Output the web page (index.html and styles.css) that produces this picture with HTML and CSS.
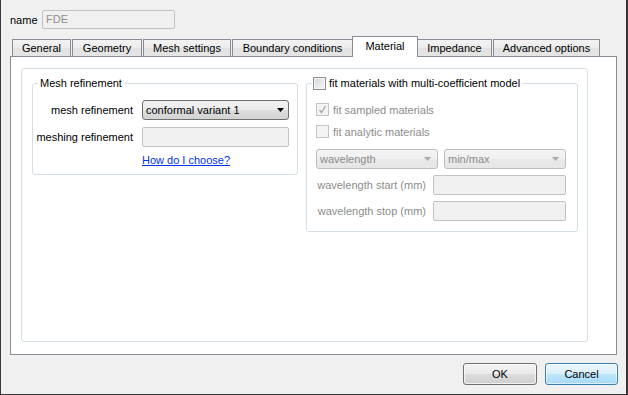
FILE: index.html
```html
<!DOCTYPE html>
<html>
<head>
<meta charset="utf-8">
<title>FDE</title>
<link rel="stylesheet" href="styles.css">
</head>
<body>
<div class="dialog">
  <div class="name-row">
    <span class="name-label">name</span>
    <div class="text-field name-field">FDE</div>
  </div>
  <div class="tabs">
    <div class="tab t-general">General</div>
    <div class="tab t-geometry">Geometry</div>
    <div class="tab t-mesh">Mesh settings</div>
    <div class="tab t-boundary">Boundary conditions</div>
    <div class="tab tab-active t-material">Material</div>
    <div class="tab t-impedance">Impedance</div>
    <div class="tab t-advanced">Advanced options</div>
  </div>
  <div class="pane">
    <div class="panel">
      <fieldset class="group group-mesh">
        <legend>Mesh refinement</legend>
        <div class="form-grid">
          <span class="field-label">mesh refinement</span>
          <div class="combo">
            <span>conformal variant 1</span>
            <svg class="arrow" width="7" height="4" viewBox="0 0 7 4"><polygon points="0,0 7,0 3.5,4" fill="#000"/></svg>
          </div>
          <span class="field-label">meshing refinement</span>
          <div class="text-field"></div>
          <a class="help-link" href="#">How do I choose?</a>
        </div>
      </fieldset>
      <fieldset class="group group-fit">
        <legend><span class="check"></span>fit materials with multi-coefficient model</legend>
        <div class="fit-body">
          <div class="check-row disabled">
            <span class="check check-disabled">
              <svg width="11" height="11" viewBox="0 0 11 11"><polyline points="2.5,6 4.5,8.5 8.5,2" fill="none" stroke="#a6a6a6" stroke-width="1.3"/></svg>
            </span>
            <span>fit sampled materials</span>
          </div>
          <div class="check-row disabled row-analytic">
            <span class="check check-disabled"></span>
            <span>fit analytic materials</span>
          </div>
          <div class="combo-row">
            <div class="combo combo-disabled">
              <span>wavelength</span>
              <svg class="arrow" width="7" height="4" viewBox="0 0 7 4"><polygon points="0,0 7,0 3.5,4" fill="#a9a9a9"/></svg>
            </div>
            <div class="combo combo-disabled">
              <span>min/max</span>
              <svg class="arrow" width="7" height="4" viewBox="0 0 7 4"><polygon points="0,0 7,0 3.5,4" fill="#a9a9a9"/></svg>
            </div>
          </div>
          <div class="range-grid">
            <span class="field-label disabled">wavelength start (mm)</span>
            <div class="text-field"></div>
            <span class="field-label disabled">wavelength stop (mm)</span>
            <div class="text-field"></div>
          </div>
        </div>
      </fieldset>
    </div>
  </div>
  <div class="buttons">
    <button class="btn btn-ok">OK</button>
    <button class="btn btn-default">Cancel</button>
  </div>
</div>
</body>
</html>
```
FILE: styles.css
```css
html, body {
  margin: 0;
  padding: 0;
  background: #f0f0f0;
}

body {
  font-family: "Liberation Sans", Arial, sans-serif;
  font-size: 11px;
  color: #000;
}

.dialog {
  width: 628px;
  height: 395px;
  box-sizing: border-box;
  background: #f0f0f0;
  border-left: 1px solid #3d3537;
  border-right: 2px solid #3d3537;
  border-bottom: 1px solid #3d3537;
  display: flex;
  flex-direction: column;
}

/* name row */
.name-row {
  display: flex;
  align-items: center;
  padding: 10px 0 0 9px;
  height: 19px;
}

.name-label {
  display: inline-block;
  width: 32px;
  padding-top: 1px;
}

.text-field {
  box-sizing: border-box;
  height: 20px;
  border: 1px solid #c2c2c2;
  border-radius: 2px;
  background: #f0f0f0;
}

.name-field {
  width: 133px;
  height: 19px;
  line-height: 17px;
  padding-left: 3px;
  color: #8e8f8f;
}

/* tabs */
.tabs {
  display: flex;
  align-items: flex-end;
  margin-top: 7px;
  padding-left: 11px;
  height: 20px;
}

.tab {
  box-sizing: border-box;
  height: 17px;
  border: 1px solid #898c95;
  border-bottom: none;
  margin-right: 1px;
  text-align: center;
  line-height: 16px;
  background: linear-gradient(#f3f3f3, #ebebeb 50%, #e2e2e2 51%, #e5e5e5);
  white-space: nowrap;
}

.tab-active {
  position: relative;
  z-index: 1;
  height: 21px;
  margin-left: -2px;
  margin-right: -1px;
  margin-bottom: -1px;
  padding-top: 2px;
  line-height: 15px;
  background: #fff;
}

.t-general { width: 59px; }
.t-geometry { width: 70px; }
.t-mesh { width: 88px; }
.t-boundary { width: 121px; }
.t-material { width: 66px; }
.t-impedance { width: 75px; }
.t-advanced { width: 107px; }

/* pane */
.pane {
  box-sizing: border-box;
  height: 299px;
  margin: 0 9px;
  border: 1px solid #898c95;
  background: #fff;
  padding: 11px 28px 12px 10px;
  display: flex;
}

.panel {
  flex: 1;
  border: 1px solid #d5dfe5;
  border-radius: 3px;
  display: flex;
  align-items: flex-start;
  gap: 8px;
  padding: 7px 0 0 10px;
}

/* group boxes */
.group {
  margin: 0;
  min-width: 0;
  box-sizing: border-box;
  border: 1px solid #d5dfe5;
  border-radius: 3px;
}

.group legend {
  line-height: 14px;
  padding: 0 2px;
}

.group-mesh {
  width: 266px;
  padding: 10px 8px 7px 5px;
}

.form-grid {
  display: grid;
  grid-template-columns: minmax(0, 1fr) 147px;
  column-gap: 9px;
  row-gap: 7px;
  align-items: center;
}

.field-label {
  justify-self: end;
  white-space: nowrap;
}

.combo {
  box-sizing: border-box;
  height: 20px;
  border: 1px solid #707070;
  border-radius: 3px;
  background: linear-gradient(#f2f2f2, #ebebeb 50%, #dddddd 51%, #d3d3d3);
  display: flex;
  align-items: center;
  justify-content: space-between;
  padding: 0 4px 0 3px;
  white-space: nowrap;
}

.arrow {
  display: block;
  flex: none;
}

.help-link {
  grid-column: 2;
  justify-self: start;
  color: #0033ee;
  text-decoration: underline;
  line-height: 13px;
}

.group-fit {
  width: 272px;
  padding: 13px 11px 10px 5px;
}

.group-fit legend {
  display: flex;
  align-items: center;
  padding: 0 3px 0 1px;
}

.group-fit legend .check {
  margin-right: 3px;
}

.check {
  box-sizing: border-box;
  width: 13px;
  height: 13px;
  flex: none;
  border: 1px solid #8e8f8f;
  background: linear-gradient(135deg, #d3d5d9, #f8f8f8);
  box-shadow: inset 0 0 0 1px #f6f6f6;
  display: flex;
  align-items: center;
  justify-content: center;
}

.check-disabled {
  border-color: #c4c4c4;
  background: #f4f4f4;
  box-shadow: none;
}

.check svg {
  display: block;
}

.fit-body {
  display: flex;
  flex-direction: column;
  padding-left: 4px;
}

.disabled {
  color: #8c8c8c;
}

.check-row {
  display: flex;
  align-items: center;
  gap: 4px;
  height: 13px;
  white-space: nowrap;
}

.row-analytic {
  margin-top: 9px;
}

.combo-row {
  display: flex;
  gap: 6px;
  margin-top: 11px;
}

.combo-row .combo {
  width: 122px;
}

.combo-disabled {
  border-color: #bdbdbd;
  background: linear-gradient(#f4f4f4, #efefef 50%, #e9e9e9 51%, #e6e6e6);
  color: #8c8c8c;
  padding-right: 6px;
}

.range-grid {
  display: grid;
  grid-template-columns: minmax(0, 1fr) 133px;
  column-gap: 7px;
  row-gap: 6px;
  align-items: center;
  margin-top: 6px;
}

/* buttons */
.buttons {
  display: flex;
  justify-content: flex-end;
  gap: 8px;
  margin-top: 8px;
  padding-right: 8px;
}

.btn {
  box-sizing: border-box;
  height: 22px;
  margin: 0;
  padding: 0;
  font-family: "Liberation Sans", Arial, sans-serif;
  font-size: 11px;
  color: #000;
  border: 1px solid #707070;
  border-radius: 3px;
  background: linear-gradient(#f2f2f2, #ebebeb 50%, #dddddd 51%, #cfcfcf);
  box-shadow: inset 0 0 0 1px rgba(255, 255, 255, 0.7);
}

.btn-ok {
  width: 74px;
}

.btn-default {
  width: 73px;
  border-color: #3c7fb1;
  background: linear-gradient(#eaf6fd, #d9f0fc 50%, #bee6fd 51%, #a7d9f5);
  box-shadow: inset 0 0 0 1px rgba(255, 255, 255, 0.6);
}
```
